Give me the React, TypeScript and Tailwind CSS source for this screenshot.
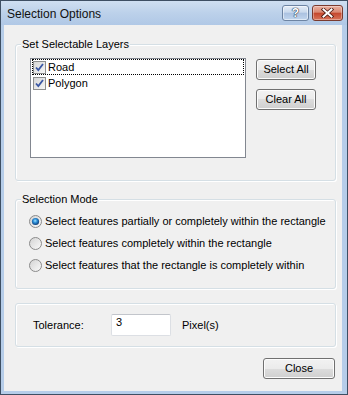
import React from "react";

const btn =
  "flex items-center justify-center rounded-[3px] border border-[#707070] bg-[linear-gradient(to_bottom,#f2f2f2_0%,#ebebeb_50%,#dddddd_50%,#cfcfcf_100%)] shadow-[inset_0_0_0_1px_#fcfcfc] text-[11px] leading-[13px] text-black";

function CheckBox() {
  return (
    <span className="flex h-[13px] w-[13px] shrink-0 items-center justify-center border border-[#8e8f8f] bg-[linear-gradient(135deg,#d6d6d6_0%,#f6f6f6_100%)]">
      <svg width="11" height="11" viewBox="0 0 11 11">
        <path d="M2 5.5 L4.3 8 L9 2" fill="none" stroke="#3a57a4" strokeWidth="1.8" />
      </svg>
    </span>
  );
}

function Radio({ on }: { on?: boolean }) {
  return (
    <svg width="13" height="13" viewBox="0 0 13 13" className="shrink-0">
      <defs>
        <linearGradient id="rbg" x1="0" y1="0" x2="1" y2="1">
          <stop offset="0" stopColor="#d2d2d2" />
          <stop offset="1" stopColor="#fbfbfb" />
        </linearGradient>
        <radialGradient id="rdot" cx="0.45" cy="0.4" r="0.6">
          <stop offset="0" stopColor="#9fe2ff" />
          <stop offset="0.45" stopColor="#2b8ed8" />
          <stop offset="1" stopColor="#0c3a73" />
        </radialGradient>
      </defs>
      <circle cx="6.5" cy="6.5" r="6" fill="url(#rbg)" stroke="#8a8a8a" strokeWidth="1" />
      {on && <circle cx="6.5" cy="6.5" r="3.6" fill="url(#rdot)" />}
    </svg>
  );
}

function Group({ label, children }: { label?: string; children: React.ReactNode }) {
  return (
    <fieldset className="m-0 rounded-[3px] border border-[#d5dfe5] p-0 shadow-[inset_1px_1px_0_#ffffff,1px_1px_0_#ffffff]">
      {label && (
        <legend className="ml-[5px] bg-[#f0f0f0] px-[1px] text-[11px] leading-[13px]">{label}</legend>
      )}
      {children}
    </fieldset>
  );
}

export default function App() {
  return (
    <div className="flex h-[395px] w-[348px] flex-col border border-[#3e4f63] bg-[#b6cde9] font-['Liberation_Sans',Arial,sans-serif] text-[11px] leading-[13px] text-black">
      {/* title bar */}
      <div className="flex h-[24px] shrink-0 bg-[linear-gradient(to_bottom,#cfdff1_0%,#bcd1ea_50%,#b0c8e6_100%)]">
        <span className="mt-[6px] pl-[6px] text-[12px] leading-[15px] text-[#111]">Selection Options</span>
        <div className="ml-auto mr-[4px] mt-[4px] flex h-[16px] gap-[3px]">
          <div className="flex h-[16px] w-[27px] items-center justify-center rounded-[3px] border border-[#6d84a3] bg-[linear-gradient(to_bottom,#e4edf7_0%,#c9d9ed_45%,#aac1e0_50%,#c2d6ee_100%)] shadow-[inset_0_0_0_1px_rgba(255,255,255,0.5)]">
            <span className="text-[12px] font-bold leading-[14px] text-white [text-shadow:0_0_1px_#20324a,0_0_1px_#20324a,0_0_1px_#20324a]">?</span>
          </div>
          <div className="flex h-[16px] w-[31px] items-center justify-center rounded-[3px] border border-[#7a3a2e] bg-[linear-gradient(to_bottom,#eab0a0_0%,#d98872_45%,#c4462c_50%,#d8745a_100%)] shadow-[inset_0_0_0_1px_rgba(255,255,255,0.35)]">
            <svg width="13" height="10" viewBox="0 0 13 10">
              <path d="M2.5 1.5 L10.5 8.5 M10.5 1.5 L2.5 8.5" stroke="#4a1a12" strokeWidth="3.6" strokeLinecap="square" />
              <path d="M2.5 1.5 L10.5 8.5 M10.5 1.5 L2.5 8.5" stroke="#ffffff" strokeWidth="2" strokeLinecap="square" />
            </svg>
          </div>
        </div>
      </div>

      {/* client area */}
      <div className="mb-[3px] ml-[3px] mr-[5px] flex flex-1 flex-col bg-[#f0f0f0] pl-[11px] pr-[6px] pt-[13px]">
        <Group label="Set Selectable Layers">
          <div className="flex pb-[22px] pl-[14px] pt-[7px]">
            <div className="h-[100px] w-[216px] border border-[#828790] bg-white p-0">
              <div className="mx-[1px] flex h-[16px] items-center gap-[2px] border border-dotted border-black">
                <CheckBox />
                <span>Road</span>
              </div>
              <div className="mx-[1px] flex h-[16px] items-center gap-[2px] border border-transparent">
                <CheckBox />
                <span>Polygon</span>
              </div>
            </div>
            <div className="ml-[10px] mt-[1px] flex flex-col gap-[9px]">
              <div className={`${btn} h-[21px] w-[60px]`}>Select All</div>
              <div className={`${btn} h-[21px] w-[60px]`}>Clear All</div>
            </div>
          </div>
        </Group>

        <div className="mt-[12px]">
          <Group label="Selection Mode">
            <div className="flex flex-col gap-[6px] pb-[15px] pl-[13px] pt-[7px]">
              <div className="flex h-[16px] items-center gap-[3px]">
                <Radio on />
                <span>Select features partially or completely within the rectangle</span>
              </div>
              <div className="flex h-[16px] items-center gap-[3px]">
                <Radio />
                <span>Select features completely within the rectangle</span>
              </div>
              <div className="flex h-[16px] items-center gap-[3px]">
                <Radio />
                <span>Select features that the rectangle is completely within</span>
              </div>
            </div>
          </Group>
        </div>

        <div className="mt-[14px]">
          <Group>
            <div className="flex items-center pb-[10px] pl-[17px] pt-[10px]">
              <span className="w-[78px]">Tolerance:</span>
              <div className="h-[22px] w-[60px] rounded-[2px] border border-[#dcdfe4] border-t-[#c2c5cb] bg-white pl-[4px] pt-[1px]">
                3
              </div>
              <span className="ml-[11px]">Pixel(s)</span>
            </div>
          </Group>
        </div>

        <div className="mt-[11px] flex justify-end pr-[1px]">
          <div className={`${btn} h-[21px] w-[72px]`}>Close</div>
        </div>
      </div>
    </div>
  );
}
